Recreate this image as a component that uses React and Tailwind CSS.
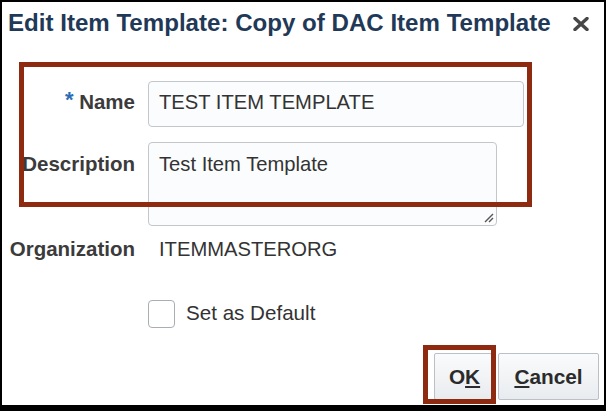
import React from 'react';

const label = "text-right font-bold text-[20.5px] leading-[24px] text-[#3b3b3b]";

export default function App() {
  return (
    <div className="relative w-[606px] h-[411px] bg-white border-2 border-b-[6px] border-black overflow-hidden font-['Liberation_Sans',Arial,sans-serif] text-[#333]">
      {/* header */}
      <div className="flex items-start mt-[7px] ml-[6px] mr-[15px]">
        <h1 className="text-[24.1px] leading-[28px] font-bold text-[#1f3957] whitespace-nowrap">
          Edit Item Template: Copy of DAC Item Template
        </h1>
        <svg className="ml-auto mt-[8px]" width="16" height="14" viewBox="0 0 16 14">
          <path d="M2 1.5 L14 12.5 M14 1.5 L2 12.5" stroke="#474747" strokeWidth="3.4" strokeLinecap="round" />
        </svg>
      </div>

      {/* name */}
      <div className="flex mt-[44px]">
        <div className={`w-[133px] pt-[8.7px] ${label}`}>
          <span className="text-[#2a6db4] text-[22px] relative top-[-2px]">*</span>{' '}Name
        </div>
        <div className="ml-[13px] w-[376px] h-[46px] rounded-[4px] border border-[#c2c7cc] bg-[#fbfcfd] pt-[7.7px] px-[10px] text-[20.2px] leading-[24px]">
          TEST ITEM TEMPLATE
        </div>
      </div>

      {/* description */}
      <div className="flex mt-[15px]">
        <div className={`w-[133px] pt-[10.4px] ${label}`}>Description</div>
        <div className="relative ml-[13px] w-[349px] h-[84px] rounded-[4px] border border-[#c2c7cc] bg-[#fbfcfd] pt-[9.4px] px-[10px] text-[20.2px] leading-[24px]">
          Test Item Template
          <svg className="absolute right-[2px] bottom-[2px]" width="12" height="12" viewBox="0 0 12 12">
            <path d="M3 11 L11 3 M7 11 L11 7" stroke="#555" strokeWidth="1.4" />
          </svg>
        </div>
      </div>

      {/* organization */}
      <div className="flex mt-[11px]">
        <div className={`w-[133px] ${label}`}>Organization</div>
        <div className="ml-[13px] pl-[11px] text-[20.2px] leading-[24px]">ITEMMASTERORG</div>
      </div>

      {/* default */}
      <div className="flex items-start mt-[39px] ml-[146px]">
        <div className="w-[27px] h-[28px] rounded-[4px] border border-[#a9aeb3] bg-white" />
        <span className="ml-[11px] pt-[0.5px] text-[20.6px] leading-[24px]">Set as Default</span>
      </div>

      {/* buttons */}
      <div className="flex justify-end gap-[6px] mt-[25px] mr-[5px]">
        <button className="w-[58px] h-[47px] rounded-[2px] border border-[#b9c0c7] bg-gradient-to-b from-[#fafbfc] to-[#e9ecef] font-bold text-[20.8px] text-[#2b2b2b] pl-[3px]">
          O<span className="underline underline-offset-2">K</span>
        </button>
        <button className="w-[101px] h-[47px] rounded-[2px] border border-[#b9c0c7] bg-gradient-to-b from-[#fafbfc] to-[#e9ecef] font-bold text-[20.8px] text-[#2b2b2b]">
          <span className="underline underline-offset-2">C</span>ancel
        </button>
      </div>

      {/* annotation boxes */}
      <div className="absolute left-[17px] top-[60px] w-[513px] h-[145px] border-[5px] border-[#8e2a10]" />
      <div className="absolute left-[421px] top-[343px] w-[73px] h-[59px] border-[5px] border-[#8e2a10]" />
    </div>
  );
}
